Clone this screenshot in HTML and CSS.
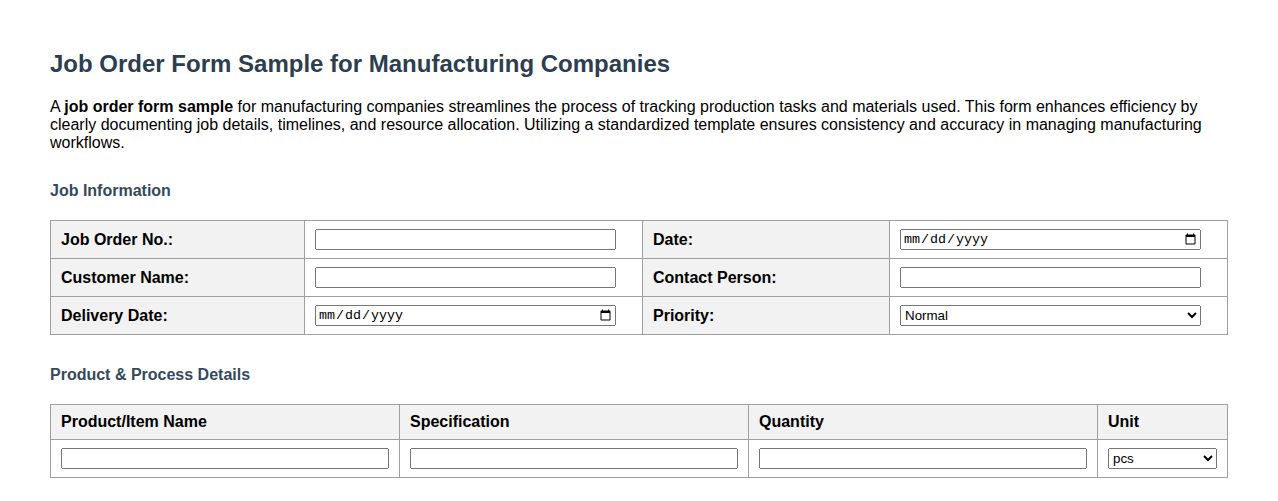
FILE: index.html
```html
<!DOCTYPE html>
<html lang="en">
<head>
<meta charset="utf-8">
<title>Job Order Form Sample for Manufacturing Companies</title>
<link rel="stylesheet" href="styles.css">
</head>
<body>
<div class="page">
  <h1 class="title">Job Order Form Sample for Manufacturing Companies</h1>
  <p class="intro">A <strong>job order form sample</strong> for manufacturing companies streamlines the process of tracking production tasks and materials used. This form enhances efficiency by clearly documenting job details, timelines, and resource allocation. Utilizing a standardized template ensures consistency and accuracy in managing manufacturing workflows.</p>

  <h3 class="section">Job Information</h3>
  <table class="grid info">
    <colgroup>
      <col class="c-l1"><col class="c-v"><col class="c-l2"><col class="c-v">
    </colgroup>
    <tr>
      <td class="label">Job Order No.:</td>
      <td><input class="field" type="text"></td>
      <td class="label">Date:</td>
      <td><input class="field date" type="date"></td>
    </tr>
    <tr>
      <td class="label">Customer Name:</td>
      <td><input class="field" type="text"></td>
      <td class="label">Contact Person:</td>
      <td><input class="field" type="text"></td>
    </tr>
    <tr>
      <td class="label">Delivery Date:</td>
      <td><input class="field date" type="date"></td>
      <td class="label">Priority:</td>
      <td><select class="field sel"><option>Normal</option><option>High</option><option>Urgent</option></select></td>
    </tr>
  </table>

  <h3 class="section section-next">Product &amp; Process Details</h3>
  <table class="grid products">
    <colgroup>
      <col class="c-p"><col class="c-p"><col class="c-p"><col class="c-u">
    </colgroup>
    <tr>
      <th>Product/Item Name</th>
      <th>Specification</th>
      <th>Quantity</th>
      <th>Unit</th>
    </tr>
    <tr>
      <td><input class="full" type="text"></td>
      <td><input class="full" type="text"></td>
      <td><input class="full" type="text"></td>
      <td><select class="full sel"><option>pcs</option><option>kg</option><option>m</option></select></td>
    </tr>
  </table>
</div>
</body>
</html>
```
FILE: styles.css
```css
html, body {
  margin: 0;
  padding: 0;
  background: #ffffff;
}
body {
  font-family: "Liberation Sans", Arial, sans-serif;
  font-size: 16px;
  color: #000;
}
.page {
  padding: 50px 50px 40px 50px;
}
.title {
  margin: 0 0 20px 0;
  font-size: 24px;
  font-weight: bold;
  color: #2c3e50;
}
.intro {
  margin: 0;
  font-size: 16px;
  line-height: normal;
}
.section {
  margin: 30px 0 20px 0;
  font-size: 16px;
  font-weight: bold;
  color: #34495e;
}
.section-next {
  margin-top: 31px;
}
.grid {
  width: 100%;
  border-collapse: collapse;
  table-layout: fixed;
}
.grid td, .grid th {
  border: 1px solid #a0a0a0;
  padding: 8px 10px;
  text-align: left;
  vertical-align: middle;
  font-size: 16px;
}
.grid th {
  background: #f2f2f2;
  font-weight: bold;
}
.grid td.label {
  background: #f2f2f2;
  font-weight: bold;
}
.c-l1 { width: 254px; }
.c-l2 { width: 247px; }
.c-v { width: 338px; }
.c-p { width: 349px; }
.c-u { width: 130px; }
input, select {
  font-family: "Liberation Sans", Arial, sans-serif;
  font-size: 13.33px;
  margin: 0;
}
.field {
  width: 301px;
  box-sizing: border-box;
  height: 21px;
}
.full {
  width: 100%;
  box-sizing: border-box;
  height: 21px;
}
.date {
  font-family: "Liberation Mono", "DejaVu Sans Mono", monospace;
}
```
